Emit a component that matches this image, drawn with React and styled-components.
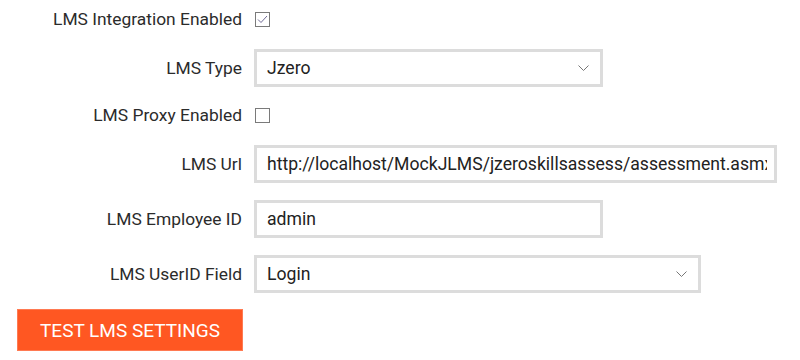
import React from 'react'
import styled, { createGlobalStyle } from 'styled-components'

const GlobalStyle = createGlobalStyle`
  body {
    margin: 0;
    background: #fff;
    font-family: Roboto, "Liberation Sans", sans-serif;
  }
`

const Form = styled.div`
  width: 800px;
  height: 360px;
  overflow: hidden;
  display: flex;
  flex-direction: column;
`

const Row = styled.div`
  display: grid;
  grid-template-columns: 242px 1fr;
  column-gap: 12px;
  align-items: center;
  height: 38px;
  margin-bottom: ${({ $space }) => $space}px;
`

const Label = styled.label`
  text-align: right;
  font-size: 17.4px;
  color: #2b2b2b;
  white-space: nowrap;
`

const Box = styled.span`
  display: flex;
  align-items: center;
  justify-content: center;
  width: 15px;
  height: 15px;
  box-sizing: border-box;
  border: 1px solid #7a7a7a;
  background: #fff;
  margin-left: 1px;
`

const Field = styled.div`
  position: relative;
  box-sizing: border-box;
  width: ${({ $w }) => $w}px;
  height: 38px;
  border: 3px solid #dcdcdc;
  display: flex;
  align-items: center;
  padding: 0 7px 0 10px;
  font-size: 17.6px;
  color: #222;
`

const Value = styled.span`
  flex: 1;
  white-space: nowrap;
  overflow: hidden;
`

const Chevron = styled.svg`
  position: absolute;
  right: 11px;
  top: 50%;
  margin-top: -3px;
`

const Button = styled.button`
  align-self: flex-start;
  margin-left: 17px;
  width: 226px;
  height: 42px;
  border: 1px solid #ff7a52;
  background: #ff5722;
  color: #fff;
  font-family: Roboto, "Liberation Sans", sans-serif;
  font-size: 19px;
  padding: 0;
  cursor: pointer;
`

const Checkbox = ({ checked }) => (
  <Box>
    {checked && (
      <svg width="11" height="9" viewBox="0 0 11 9">
        <path d="M1 4.5 L4 7.5 L10 1" fill="none" stroke="#6f6a96" strokeWidth="1" />
      </svg>
    )}
  </Box>
)

const Select = ({ value, w }) => (
  <Field $w={w}>
    <Value>{value}</Value>
    <Chevron width="11" height="6" viewBox="0 0 11 6">
      <path d="M0.5 0.5 L5.5 5.5 L10.5 0.5" fill="none" stroke="#777" strokeWidth="1" />
    </Chevron>
  </Field>
)

export default function App() {
  return (
    <>
      <GlobalStyle />
      <Form>
        <Row $space={11}>
          <Label>LMS Integration Enabled</Label>
          <Checkbox checked />
        </Row>
        <Row $space={9}>
          <Label>LMS Type</Label>
          <Select value="Jzero" w={349} />
        </Row>
        <Row $space={11}>
          <Label>LMS Proxy Enabled</Label>
          <Checkbox />
        </Row>
        <Row $space={17}>
          <Label>LMS Url</Label>
          <Field $w={523}>
            <Value>http://localhost/MockJLMS/jzeroskillsassess/assessment.asmx</Value>
          </Field>
        </Row>
        <Row $space={17}>
          <Label>LMS Employee ID</Label>
          <Field $w={349}>
            <Value>admin</Value>
          </Field>
        </Row>
        <Row $space={16}>
          <Label>LMS UserID Field</Label>
          <Select value="Login" w={447} />
        </Row>
        <Button>TEST LMS SETTINGS</Button>
      </Form>
    </>
  )
}
